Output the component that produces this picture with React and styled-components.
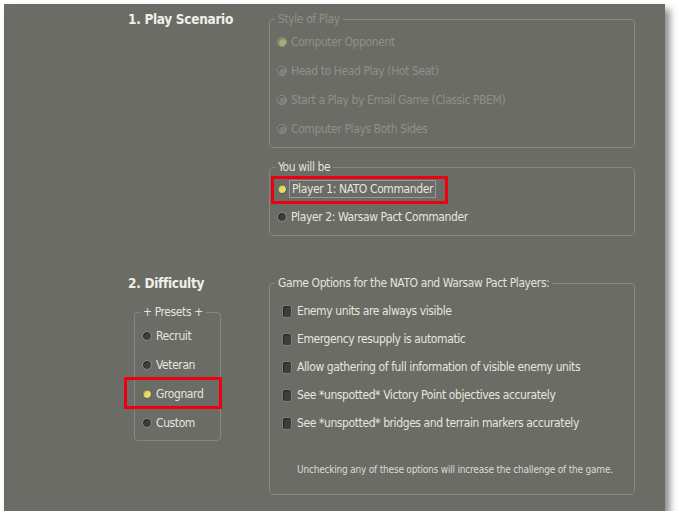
import React from "react";
import styled, { createGlobalStyle } from "styled-components";

const GlobalStyle = createGlobalStyle`
  html, body {
    margin: 0;
    padding: 0;
    background: #ffffff;
  }
  body {
    font-family: "DejaVu Sans Condensed", "DejaVu Sans", sans-serif;
    font-stretch: condensed;
    letter-spacing: -0.4px;
  }
`;

const Panel = styled.div`
  margin: 4px 0 0 4px;
  width: 661px;
  height: 507px;
  box-sizing: border-box;
  padding: 7px 0 0 124px;
  background: #6a6c65;
  box-shadow: 5px 5px 7px rgba(0, 0, 0, 0.45);
  display: flex;
  flex-direction: column;
  gap: 39px;
`;

const Section = styled.div`
  display: grid;
  grid-template-columns: 141px 366px;
  align-items: start;
`;

const Heading = styled.h2`
  margin: 0;
  font-size: 13.5px;
  line-height: 16px;
  font-weight: 700;
  letter-spacing: -0.3px;
  color: #efefe8;
`;

const Stack = styled.div`
  display: flex;
  flex-direction: column;
  gap: 11px;
`;

const Group = styled.fieldset`
  margin: ${(p) => p.$margin || "0"};
  width: ${(p) => p.$width || "auto"};
  min-width: 0;
  box-sizing: border-box;
  padding: 0;
  border: 1px solid #858880;
  border-radius: 4px;
`;

const Legend = styled.legend`
  margin-left: 5px;
  padding: 0 3px;
  font-size: 12px;
  line-height: 16px;
  color: ${(p) => (p.$disabled ? "#8e9189" : "#e4e4dc")};
  white-space: nowrap;
`;

const Body = styled.div`
  padding: ${(p) => p.$pad};
`;

const Row = styled.div`
  position: relative;
  display: flex;
  align-items: center;
  gap: ${(p) => p.$gap || 4}px;
  height: ${(p) => p.$h || 28}px;
  font-size: 12px;
  color: ${(p) => (p.$disabled ? "#8e9189" : "#e6e6de")};
  white-space: nowrap;
`;

const Radio = styled.span`
  flex: none;
  width: 8px;
  height: 8px;
  border-radius: 50%;
  background: ${(p) =>
    p.$checked
      ? p.$disabled
        ? "#aeab78"
        : "#e6d970"
      : p.$disabled
      ? "#7d8079"
      : "#3b3e39"};
  border: 1px solid
    ${(p) => (p.$disabled ? "#8c8f87" : p.$checked ? "#5a5a44" : "#8c8f87")};
  box-shadow: inset 1px 1px 1px rgba(0, 0, 0, 0.35);
`;

const Check = styled.span`
  flex: none;
  width: 8px;
  height: 11px;
  border-radius: 3px;
  background: #3b3e39;
  border: 1px solid #7d8079;
  box-shadow: inset 1px 1px 1px rgba(0, 0, 0, 0.4);
`;

const Focus = styled.span`
  outline: 1px solid #8d9aa5;
  outline-offset: 1px;
  padding: 0 1px;
`;

const Marker = styled.span`
  position: absolute;
  left: ${(p) => p.$left}px;
  top: ${(p) => p.$top}px;
  width: ${(p) => p.$w}px;
  height: ${(p) => p.$hh}px;
  box-sizing: border-box;
  border: 3px solid #ee0010;
  pointer-events: none;
`;

const Note = styled.div`
  margin: 27px 0 0 15px;
  font-size: 10px;
  line-height: 12px;
  letter-spacing: -0.2px;
  color: #dcdcd4;
  white-space: nowrap;
`;

const styles = [
  { label: "Computer Opponent", checked: true },
  { label: "Head to Head Play (Hot Seat)" },
  { label: "Start a Play by Email Game (Classic PBEM)" },
  { label: "Computer Plays Both Sides" },
];

const presets = ["Recruit", "Veteran", "Grognard", "Custom"];

const options = [
  "Enemy units are always visible",
  "Emergency resupply is automatic",
  "Allow gathering of full information of visible enemy units",
  "See *unspotted* Victory Point objectives accurately",
  "See *unspotted* bridges and terrain markers accurately",
];

export default function App() {
  return (
    <>
      <GlobalStyle />
      <Panel>
        <Section>
          <Heading>1. Play Scenario</Heading>
          <Stack>
            <Group>
              <Legend $disabled>Style of Play</Legend>
              <Body $pad="0 0 4px 7px">
                {styles.map((s) => (
                  <Row key={s.label} $h={29} $disabled>
                    <Radio $disabled $checked={s.checked} />
                    {s.label}
                  </Row>
                ))}
              </Body>
            </Group>
            <Group>
              <Legend>You will be</Legend>
              <Body $pad="0 0 4px 7px">
                <Row>
                  <Radio $checked />
                  <Focus>Player 1: NATO Commander</Focus>
                  <Marker $left={-6} $top={1} $w={177} $hh={28} />
                </Row>
                <Row>
                  <Radio />
                  Player 2: Warsaw Pact Commander
                </Row>
              </Body>
            </Group>
          </Stack>
        </Section>
        <Section>
          <div>
            <Heading>2. Difficulty</Heading>
            <Group $margin="13px 0 0 6px" $width="87px">
              <Legend>+ Presets +</Legend>
              <Body $pad="1px 0 3px 7px">
                {presets.map((p) => (
                  <Row key={p} $h={29}>
                    <Radio $checked={p === "Grognard"} />
                    {p}
                    {p === "Grognard" && (
                      <Marker $left={-18} $top={-2} $w={98} $hh={32} />
                    )}
                  </Row>
                ))}
              </Body>
            </Group>
          </div>
          <Group>
            <Legend>Game Options for the NATO and Warsaw Pact Players:</Legend>
            <Body $pad="6px 0 18px 12px">
              {options.map((o) => (
                <Row key={o} $gap={5}>
                  <Check />
                  {o}
                </Row>
              ))}
              <Note>
                Unchecking any of these options will increase the challenge of
                the game.
              </Note>
            </Body>
          </Group>
        </Section>
      </Panel>
    </>
  );
}
